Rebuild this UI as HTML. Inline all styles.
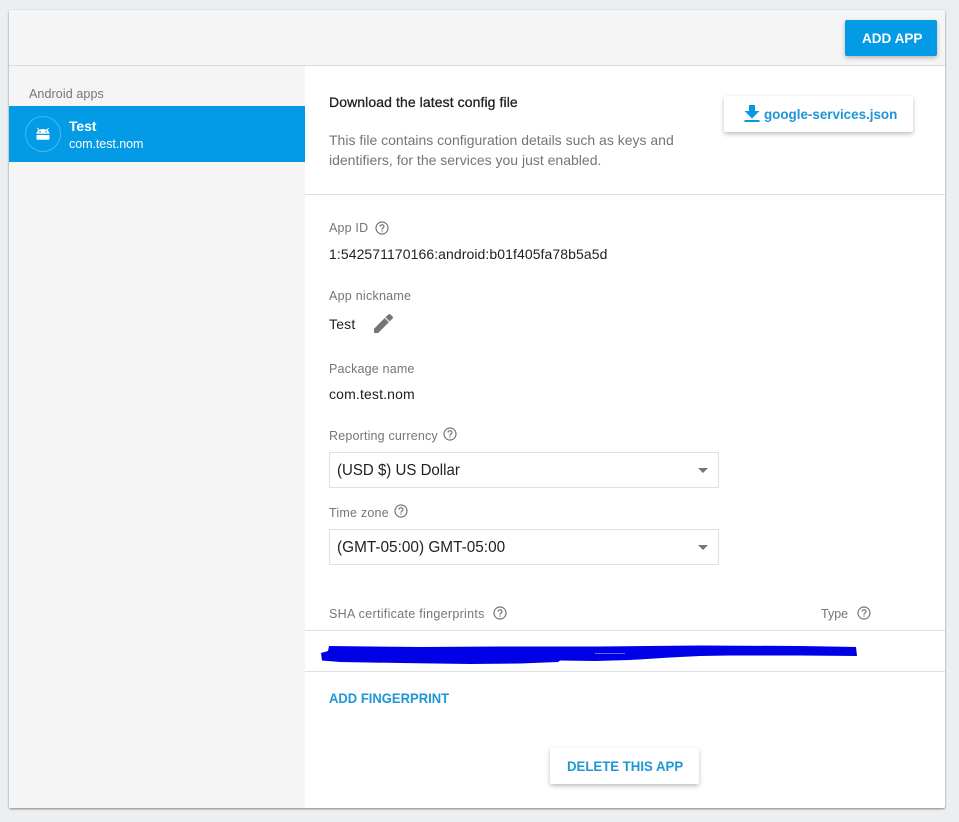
<!DOCTYPE html>
<html><head><meta charset="utf-8"><style>
html,body{margin:0;padding:0;width:959px;height:822px;overflow:hidden;background:#eceff1;font-family:"Liberation Sans",sans-serif}
.a{position:absolute;white-space:nowrap}
.l{font-size:12.5px;color:#757575;line-height:16px;letter-spacing:.18px}
.v{font-size:14px;color:#212121;line-height:18px}
.h{position:absolute}
.sel{position:absolute;left:329px;width:388px;height:34px;border:1px solid #e0e0e0;background:#fff}
.sel span{position:absolute;left:7px;top:8px;font-size:16px;line-height:19px;color:#212121;white-space:nowrap;transform-origin:0 50%}
.sel i{position:absolute;left:368px;top:15px;width:0;height:0;border-left:5px solid transparent;border-right:5px solid transparent;border-top:5px solid #757575}
.btn{position:absolute;background:#fff;box-shadow:0 2px 5px rgba(0,0,0,.26);border-radius:2px}
.ln{position:absolute;height:1px;background:#e0e0e0}
.q circle{fill:none;stroke:#757575;stroke-width:1.2}
.q path{fill:none;stroke:#757575;stroke-width:1.2}
.q rect{fill:#757575}
</style></head><body>
<div class="a" style="left:9px;top:10px;width:936px;height:798px;background:#fff;box-shadow:0 1px 2px rgba(0,0,0,.45);border-radius:2px"></div>
<div class="a" style="left:9px;top:10px;width:936px;height:55px;background:#f5f5f5;border-radius:2px 2px 0 0"></div>
<div class="a" style="left:9px;top:66px;width:296px;height:742px;background:#f5f5f5"></div>
<div class="ln" style="left:9px;top:65px;width:936px;background:#dcdcdc"></div>

<div class="btn" style="left:845px;top:20px;width:92px;height:36px;background:#039be5"></div>
<div class="a" style="left:862px;top:20px;font-size:14px;font-weight:bold;color:#fff;line-height:37px;transform:scaleX(.967);transform-origin:0 50%">ADD APP</div>

<div class="a l" style="left:29px;top:86px;letter-spacing:.1px">Android apps</div>
<div class="a" style="left:9px;top:106px;width:296px;height:56px;background:#039be5"></div>
<svg class="h" style="left:25px;top:116px" width="36" height="36" viewBox="0 0 36 36">
<circle cx="18" cy="18" r="17.5" fill="none" stroke="#fff" stroke-opacity=".28"/>
<path d="M11.500 17.800C11.700 15 14.200 13 18 13S24.300 15 24.500 17.800Z" fill="#fff"/>
<path d="M11.500 19H24.500V22.500C24.500 23.300 24 23.800 23.200 23.800H12.800C12 23.800 11.500 23.300 11.500 22.500Z" fill="#fff"/>
<path d="M13.800 14.200L12.500 12M22.200 14.200L23.500 12" stroke="#fff" fill="none"/>
<circle cx="15" cy="15.800" r=".8" fill="#039be5"/><circle cx="21" cy="15.800" r=".8" fill="#039be5"/>
</svg>
<div class="a" style="left:69px;top:118px;font-size:14px;font-weight:bold;color:#fff;line-height:17px;letter-spacing:-.1px">Test</div>
<div class="a" style="left:69px;top:137px;font-size:12.5px;color:#fff;line-height:15px;letter-spacing:-.05px">com.test.nom</div>

<div class="a" style="left:329px;top:94px;font-size:14px;color:#212121;line-height:16px;letter-spacing:.09px;-webkit-text-stroke:.3px #212121">Download the latest config file</div>
<div class="a" style="left:329px;top:130px;font-size:14px;color:#757575;line-height:20px">This file contains configuration details such as keys and<br>identifiers, for the services you just enabled.</div>
<div class="btn" style="left:724px;top:96px;width:189px;height:36px"></div>
<svg class="h" style="left:744px;top:105px" width="16" height="18" viewBox="0 0 16 18"><path d="M5 0H11V6H15.500L8 13.500L.5 6H5ZM.5 15H15.500V17H.5Z" fill="#039be5"/></svg>
<div class="a" style="left:764px;top:105px;font-size:14px;font-weight:bold;color:#1e96d6;line-height:18px;transform:scaleX(.957);transform-origin:0 50%">google-services.json</div>
<div class="ln" style="left:305px;top:194px;width:640px"></div>

<div class="a l" style="left:329px;top:220px">App ID</div>
<svg class="h q" style="left:375px;top:221px" width="14" height="14" viewBox="0 0 14 14"><circle cx="7" cy="7" r="6"/><path d="M5 5.600C5 3.200 9 3.200 9 5.500C9 6.900 7 6.900 7 8.600"/><rect x="6.400" y="9.400" width="1.200" height="1.300"/></svg>
<div class="a v" style="left:329px;top:245px;letter-spacing:.08px">1:542571170166:android:b01f405fa78b5a5d</div>

<div class="a l" style="left:329px;top:288px;letter-spacing:.25px">App nickname</div>
<div class="a v" style="left:329px;top:315px;letter-spacing:.2px">Test</div>
<svg class="h" style="left:373px;top:314px" width="20" height="20" viewBox="0 0 20 20"><path d="M1 14.800V19H5.200L15.900 8.200L11.700 4ZM19.700 4.400C20.100 4 20.100 3.300 19.700 2.800L17.200.3C16.700-.1 16-.1 15.600.3L12.400 3.300L16.600 7.500Z" fill="#757575"/></svg>

<div class="a l" style="left:329px;top:361px">Package name</div>
<div class="a v" style="left:329px;top:385px;letter-spacing:.15px">com.test.nom</div>

<div class="a l" style="left:329px;top:428px">Reporting currency</div>
<svg class="h q" style="left:443px;top:427px" width="14" height="14" viewBox="0 0 14 14"><circle cx="7" cy="7" r="6"/><path d="M5 5.600C5 3.200 9 3.200 9 5.500C9 6.900 7 6.900 7 8.600"/><rect x="6.400" y="9.400" width="1.200" height="1.300"/></svg>
<div class="sel" style="top:452px"><span style="transform:scaleX(.94)">(USD $) US Dollar</span><i></i></div>

<div class="a l" style="left:329px;top:505px;letter-spacing:.22px">Time zone</div>
<svg class="h q" style="left:394px;top:504px" width="14" height="14" viewBox="0 0 14 14"><circle cx="7" cy="7" r="6"/><path d="M5 5.600C5 3.200 9 3.200 9 5.500C9 6.900 7 6.900 7 8.600"/><rect x="6.400" y="9.400" width="1.200" height="1.300"/></svg>
<div class="sel" style="top:529px"><span style="transform:scaleX(.96)">(GMT-05:00) GMT-05:00</span><i></i></div>

<div class="a l" style="left:329px;top:606px;letter-spacing:.3px">SHA certificate fingerprints</div>
<svg class="h q" style="left:493px;top:606px" width="14" height="14" viewBox="0 0 14 14"><circle cx="7" cy="7" r="6"/><path d="M5 5.600C5 3.200 9 3.200 9 5.500C9 6.900 7 6.900 7 8.600"/><rect x="6.400" y="9.400" width="1.200" height="1.300"/></svg>
<div class="a l" style="left:821px;top:606px;letter-spacing:0">Type</div>
<svg class="h q" style="left:857px;top:606px" width="14" height="14" viewBox="0 0 14 14"><circle cx="7" cy="7" r="6"/><path d="M5 5.600C5 3.200 9 3.200 9 5.500C9 6.900 7 6.900 7 8.600"/><rect x="6.400" y="9.400" width="1.200" height="1.300"/></svg>
<div class="ln" style="left:305px;top:630px;width:640px"></div>
<div class="ln" style="left:305px;top:671px;width:640px"></div>
<svg class="h" style="left:300px;top:640px" width="560" height="30" viewBox="0 0 560 30"><path d="M29 6L120 7L200 6.500L300 6.500L400 5.500L500 6L556 7L557 16L500 15.500L430 15.500L400 16L370 17.500L330 20L295 21L260 20.500L258 22L220 23.500L170 24L100 23L40 22L22 20.500L21 13L28 11Z" fill="#0000e6"/><path d="M295 13.500H325" stroke="#c8c8f5" stroke-width=".6"/></svg>

<div class="a" style="left:329px;top:690px;font-size:14px;font-weight:bold;color:#1e96d6;line-height:17px;transform:scaleX(.93);transform-origin:0 50%">ADD FINGERPRINT</div>
<div class="btn" style="left:550px;top:748px;width:149px;height:36px"></div>
<div class="a" style="left:567px;top:748px;font-size:14px;font-weight:bold;color:#1e96d6;line-height:36px;transform:scaleX(.943);transform-origin:0 50%">DELETE THIS APP</div>
</body></html>
